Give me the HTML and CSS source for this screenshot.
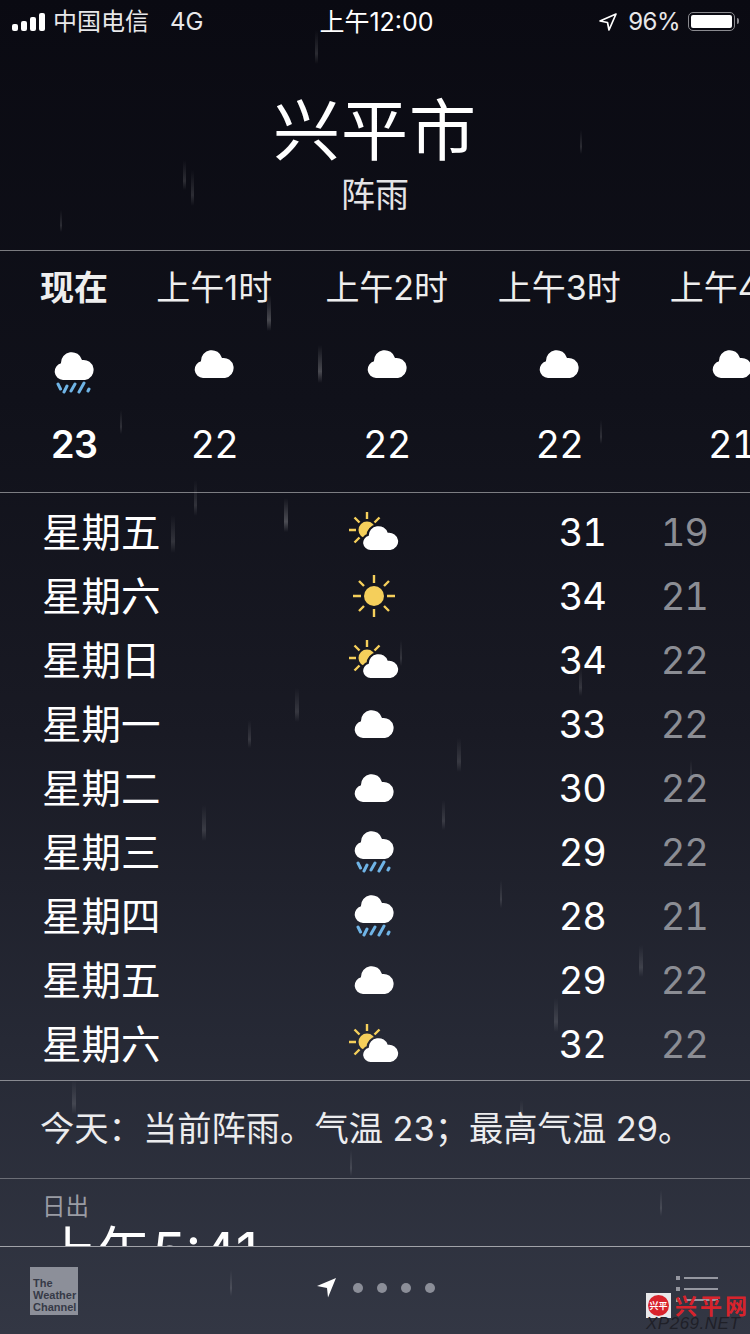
FILE: index.html
```html
<!DOCTYPE HTML>
<html lang="zh"><head>
  <meta charset="utf-8">
  <title>天气</title>
  <link rel="stylesheet" href="styles.css">
</head>
<body>

<svg class="defs" width="0" height="0">
  <mask id="behind-cloud" maskUnits="userSpaceOnUse" x="0" y="0" width="50" height="38">
    <rect width="50" height="38" fill="#fff"/>
    <path transform="translate(13.500 14) scale(.9 .857)" fill="#000" stroke="#000" stroke-width="5" d="M9 28a8.500 8.500 0 0 1-2-16.700A10.700 10.700 0 0 1 28 8a10.100 10.100 0 0 1 3 20z"/>
  </mask>
  <symbol id="cloud" viewBox="0 0 40 28">
    <path d="M9 28a8.500 8.500 0 0 1-2-16.700A10.700 10.700 0 0 1 28 8a10.100 10.100 0 0 1 3 20z"/>
  </symbol>
  <symbol id="rain" viewBox="0 0 40 42">
    <path fill="#fff" d="M9 28a8.500 8.500 0 0 1-2-16.700A10.700 10.700 0 0 1 28 8a10.100 10.100 0 0 1 3 20z"/>
    <path fill="none" stroke="#6fb4e6" stroke-width="3" stroke-linecap="round" d="M4 32l2.500 5M13 34l-3 6M21 32l-4 7M30 31l-5 9M35 37l-1 2"/>
  </symbol>
  <symbol id="sun" viewBox="0 0 42 42">
    <circle cx="21" cy="21" r="10" fill="#f5cf5b"/>
    <path fill="none" stroke="#f5cf5b" stroke-width="2.400" d="M21 0v8M21 34v8M0 21h8M34 21h8M6 6l5 5M31 31l5 5M36 6l-5 5M11 31l-5 5"/>
  </symbol>
  <symbol id="partly" viewBox="0 0 50 38">
    <g mask="url(#behind-cloud)">
      <circle cx="18" cy="18" r="8.500" fill="#f5cf5b"/>
      <path fill="none" stroke="#f5cf5b" stroke-width="2.400" d="M18 0v7M0 18h7M5.500 5.500l5 5M30.500 5.500l-5 5M5.500 30.500l5-5"/>
    </g>
    <path transform="translate(13.500 14) scale(.9 .857)" fill="#fff" d="M9 28a8.500 8.500 0 0 1-2-16.700A10.700 10.700 0 0 1 28 8a10.100 10.100 0 0 1 3 20z"/>
  </symbol>
</svg>

<div class="status">
  <div class="status-left">
    <span class="signal"><i class="b1"></i><i class="b2"></i><i class="b3"></i><i class="b4"></i></span>
    <span>中国电信</span>
    <span class="net">4G</span>
  </div>
  <div class="status-time">上午12:00</div>
  <div class="status-right">
    <svg class="loc" width="20" height="20" viewBox="0 0 20 20"><path fill="none" stroke="#fff" stroke-width="1.700" stroke-linejoin="round" d="M18 2L2 9l7.500 1.500L11 18z"/></svg>
    <span>96%</span>
    <span class="battery"><i></i></span>
  </div>
</div>

<header class="head">
  <h1>兴平市</h1>
  <p>阵雨</p>
</header>

<section class="hours">
  <div class="hour now"><span class="label">现在</span><svg class="ic-rain hour-rain"><use href="#rain"/></svg><span class="temp">23</span></div>
  <div class="hour"><span class="label">上午1时</span><svg class="ic-cloud"><use href="#cloud"/></svg><span class="temp">22</span></div>
  <div class="hour"><span class="label">上午2时</span><svg class="ic-cloud"><use href="#cloud"/></svg><span class="temp">22</span></div>
  <div class="hour"><span class="label">上午3时</span><svg class="ic-cloud"><use href="#cloud"/></svg><span class="temp">22</span></div>
  <div class="hour"><span class="label">上午4时</span><svg class="ic-cloud"><use href="#cloud"/></svg><span class="temp">21</span></div>
</section>

<section class="days">
  <div class="day"><span class="name">星期五</span><svg class="ic-partly"><use href="#partly"/></svg><span class="hi">31</span><span class="lo">19</span></div>
  <div class="day"><span class="name">星期六</span><svg class="ic-sun"><use href="#sun"/></svg><span class="hi">34</span><span class="lo">21</span></div>
  <div class="day"><span class="name">星期日</span><svg class="ic-partly"><use href="#partly"/></svg><span class="hi">34</span><span class="lo">22</span></div>
  <div class="day"><span class="name">星期一</span><svg class="ic-cloud"><use href="#cloud"/></svg><span class="hi">33</span><span class="lo">22</span></div>
  <div class="day"><span class="name">星期二</span><svg class="ic-cloud"><use href="#cloud"/></svg><span class="hi">30</span><span class="lo">22</span></div>
  <div class="day"><span class="name">星期三</span><svg class="ic-rain"><use href="#rain"/></svg><span class="hi">29</span><span class="lo">22</span></div>
  <div class="day"><span class="name">星期四</span><svg class="ic-rain"><use href="#rain"/></svg><span class="hi">28</span><span class="lo">21</span></div>
  <div class="day"><span class="name">星期五</span><svg class="ic-cloud"><use href="#cloud"/></svg><span class="hi">29</span><span class="lo">22</span></div>
  <div class="day"><span class="name">星期六</span><svg class="ic-partly"><use href="#partly"/></svg><span class="hi">32</span><span class="lo">22</span></div>
</section>

<p class="today">今天：当前阵雨。气温 23；最高气温 29。</p>

<section class="sunrise">
  <div class="sunrise-label">日出</div>
  <div class="sunrise-time">上午5:41</div>
</section>

<footer class="foot">
  <div class="twc">The<br>Weather<br>Channel</div>
  <div class="pager">
    <svg class="pager-arrow" width="20" height="20" viewBox="0 0 20 20"><path fill="#fff" d="M19 0L0 8l10 2 1 9.500z"/></svg>
    <i></i><i></i><i></i><i></i>
  </div>
  <div class="list"><i></i><i></i><i></i></div>
</footer>

<div class="mark">
  <span class="mark-logo"><b>兴平</b></span>
  <span class="mark-name">兴平网</span>
  <span class="mark-url">XP269.NET</span>
</div>

</body>
</html>
```

FILE: styles.css
```css
html, body { margin: 0; padding: 0; }

body {
  width: 750px;
  height: 1334px;
  overflow: hidden;
  position: relative;
  color: #fff;
  font-family: Inter, "Noto Sans CJK SC", sans-serif;
  --r1: linear-gradient(rgba(255,255,255,0), rgba(255,255,255,.24) 70%, rgba(255,255,255,0));
  --r2: linear-gradient(rgba(255,255,255,0), rgba(255,255,255,.13) 70%, rgba(255,255,255,0));
  background:
    var(--r1) 267px 295px / 4px 36px no-repeat,
    var(--r1) 318px 345px / 4px 38px no-repeat,
    var(--r1) 284px 498px / 4px 34px no-repeat,
    var(--r2) 171px 515px / 4px 38px no-repeat,
    var(--r2) 191px 170px / 3px 36px no-repeat,
    var(--r2) 183px 160px / 3px 30px no-repeat,
    var(--r2) 295px 688px / 4px 34px no-repeat,
    var(--r2) 457px 738px / 4px 34px no-repeat,
    var(--r2) 202px 805px / 4px 36px no-repeat,
    var(--r2) 639px 945px / 4px 32px no-repeat,
    var(--r2) 554px 998px / 4px 34px no-repeat,
    var(--r2) 72px 1080px / 4px 34px no-repeat,
    var(--r2) 194px 480px / 3px 36px no-repeat,
    var(--r2) 579px 668px / 3px 28px no-repeat,
    var(--r2) 315px 30px / 3px 34px no-repeat,
    var(--r2) 442px 800px / 3px 30px no-repeat,
    var(--r2) 248px 720px / 3px 28px no-repeat,
    var(--r2) 60px 210px / 2px 22px no-repeat,
    var(--r2) 520px 1100px / 3px 30px no-repeat,
    var(--r2) 120px 410px / 2px 24px no-repeat,
    var(--r2) 600px 420px / 2px 24px no-repeat,
    var(--r2) 400px 640px / 2px 26px no-repeat,
    var(--r2) 690px 760px / 2px 26px no-repeat,
    var(--r2) 100px 900px / 2px 28px no-repeat,
    var(--r2) 500px 880px / 2px 28px no-repeat,
    var(--r2) 350px 1150px / 2px 26px no-repeat,
    var(--r2) 660px 1190px / 2px 26px no-repeat,
    var(--r2) 230px 1270px / 2px 26px no-repeat,
    var(--r2) 580px 130px / 2px 24px no-repeat,
    linear-gradient(#0a0a12 0, #10111a 30%, #191a24 55%, #262935 78%, #333744 100%);
}

.defs { position: absolute; }

svg { display: block; fill: #fff; }
.ic-cloud { width: 40px; height: 28px; }
.ic-rain { width: 40px; height: 42px; }
.ic-sun { width: 42px; height: 42px; }
.ic-partly { width: 50px; height: 38px; }

/* status bar */
.status {
  height: 40px;
  padding: 3px 12px 0;
  box-sizing: border-box;
  display: grid;
  grid-template-columns: 1fr auto 1fr;
  align-items: center;
  font-size: 24px;
  line-height: 36px;
}
.status-left { display: flex; align-items: center; gap: 8px; color: #e8e8ea; }
.net { margin-left: 13px; }
.status-time { margin-left: 3px; font-size: 25px; }
.status-right { display: flex; align-items: center; justify-content: flex-end; gap: 6px; color: #e8e8ea; letter-spacing: -.5px; }
.signal { display: flex; align-items: flex-end; gap: 3px; height: 18px; }
.signal i { display: block; width: 6px; background: #fff; border-radius: 2px; }
.signal .b1 { height: 7px; }
.signal .b2 { height: 10px; }
.signal .b3 { height: 14px; }
.signal .b4 { height: 18px; }
.loc { margin-right: 4px; }
.battery {
  display: block;
  width: 47px;
  height: 19px;
  border: 1.500px solid #8a8a8f;
  border-radius: 5px;
  padding: 2px;
  box-sizing: border-box;
  margin-left: 2px;
  margin-right: 3px;
  position: relative;
}
.battery i { display: block; height: 100%; background: #fff; border-radius: 2px; }
.battery::after {
  content: "";
  position: absolute;
  right: -5px;
  top: 5px;
  width: 2px;
  height: 6px;
  background: #8a8a8f;
  border-radius: 0 2px 2px 0;
}

/* city */
.head { height: 210px; text-align: center; box-sizing: border-box; padding-top: 47px; }
.head h1 { margin: 0; font-size: 67px; line-height: 88px; font-weight: 400; letter-spacing: 1px; }
.head p { margin: 0; font-size: 34px; line-height: 40px; color: #e4e4e6; }

/* hourly strip */
.hours {
  height: 243px;
  box-sizing: border-box;
  border-top: 1px solid rgba(255,255,255,.45);
  border-bottom: 1px solid rgba(255,255,255,.45);
  padding-left: 20px;
  display: flex;
  overflow: hidden;
}
.hour { flex: 0 0 172.500px; display: flex; flex-direction: column; align-items: center; font-size: 34px; }
.hour.now { flex-basis: 108px; font-weight: 700; }
.label { height: 74px; line-height: 74px; white-space: nowrap; color: #eee; }
.hour svg { margin-top: 25px; margin-bottom: 44px; }
.hour .hour-rain { margin-top: 27px; margin-bottom: 28px; }
.temp { font-size: 38px; line-height: 44px; font-variant-numeric: tabular-nums; letter-spacing: -1px; }
.now .temp { font-weight: 600; }

/* daily list */
.days { height: 588px; box-sizing: border-box; padding: 7px 42px 0; border-bottom: 1px solid rgba(255,255,255,.45); }
.day {
  height: 64px;
  display: grid;
  grid-template-columns: 282px 100px 182px 102px;
  justify-items: start;
  align-items: center;
  font-size: 38px;
  letter-spacing: -1px;
  font-variant-numeric: tabular-nums;
}
.day svg { justify-self: center; }
.day .ic-partly { margin-top: -2px; }
.name { font-size: 39.500px; letter-spacing: 0; margin-top: -6px; }
.hi { justify-self: end; margin-top: -1px; }
.lo { justify-self: end; margin-top: -1px; color: #8b8d94; }

.today {
  margin: 0;
  height: 98px;
  box-sizing: border-box;
  padding: 0 40px;
  line-height: 95px;
  font-size: 34.300px;
  color: #ececee;
  white-space: nowrap;
  border-bottom: 1px solid rgba(255,255,255,.3);
}

/* sunrise, cut off by the footer */
.sunrise { height: 67px; overflow: hidden; padding-left: 42px; }
.sunrise-label { font-size: 23.500px; line-height: 30px; margin-top: 13px; color: #9a9ca4; }
.sunrise-time { font-size: 55px; line-height: 60px; margin-top: 0; white-space: nowrap; }

/* footer bar */
.foot {
  height: 88px;
  box-sizing: border-box;
  border-top: 1px solid rgba(255,255,255,.55);
  padding: 20px 32px 0 30px;
  display: grid;
  grid-template-columns: 1fr auto 1fr;
  align-items: start;
}
.twc {
  width: 48px;
  height: 48px;
  box-sizing: border-box;
  padding-top: 10px;
  padding-left: 3px;
  background: #8c8f99;
  color: #363a47;
  font-family: "Liberation Sans", sans-serif;
  font-size: 11px;
  line-height: 12px;
  font-weight: 700;
}
.pager { display: flex; align-items: center; gap: 14px; height: 42px; margin-left: 4px; }
.pager i { display: block; width: 10px; height: 10px; border-radius: 50%; background: #8b8e98; }
.pager-arrow { margin-right: 2px; }
.list { justify-self: end; width: 42px; padding-top: 10px; }
.list i { display: block; height: 2px; margin-bottom: 9px; margin-left: 8px; background: #9597a0; position: relative; }
.list i::before { content: ""; position: absolute; left: -8px; top: -1px; width: 4px; height: 4px; background: #9597a0; }

/* watermark over the corner */
.mark { position: absolute; left: 646px; top: 1292px; width: 104px; height: 42px; }
.mark-logo {
  position: absolute;
  left: 0;
  top: 1px;
  width: 25px;
  height: 25px;
  background: #e8e8ea;
  display: flex;
  align-items: center;
  justify-content: center;
}
.mark-logo b {
  display: block;
  width: 21px;
  height: 21px;
  border-radius: 50%;
  background: #d8232c;
  color: #fff;
  font-size: 9px;
  line-height: 21px;
  text-align: center;
  white-space: nowrap;
}
.mark-name {
  position: absolute;
  left: 29px;
  top: -3px;
  font-family: "Noto Sans CJK SC", sans-serif;
  font-size: 22px;
  line-height: 30px;
  font-weight: 700;
  letter-spacing: 3px;
  color: #d8232c;
  white-space: nowrap;
}
.mark-url {
  position: absolute;
  left: 0;
  top: 23px;
  font-family: "Liberation Sans", sans-serif;
  font-style: italic;
  font-size: 17px;
  line-height: 18px;
  color: #1f2028;
  white-space: nowrap;
  letter-spacing: .5px;
}
```
